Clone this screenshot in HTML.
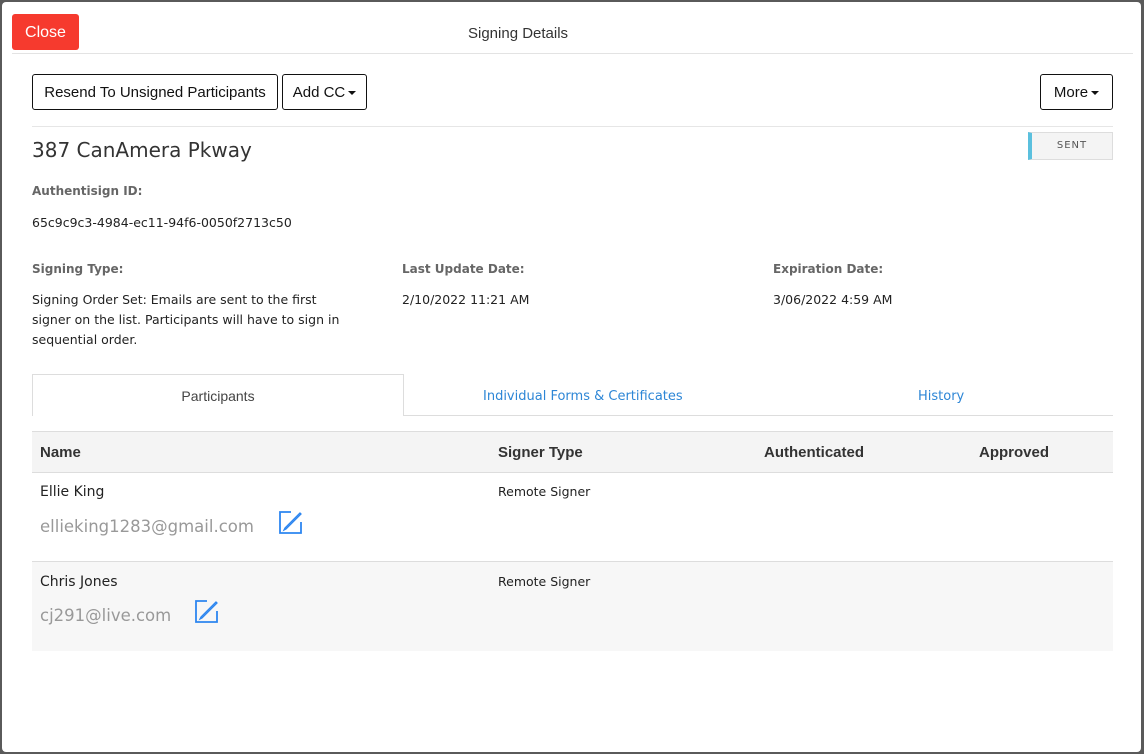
<!DOCTYPE html><html><head><style>
body{margin:0;width:1144px;height:754px;background:#5a5a5a;font-family:"Liberation Sans",sans-serif;position:relative;overflow:hidden}
.m{position:absolute;left:2px;top:2px;width:1139px;height:750px;background:#fff;border-radius:4px}
.a{position:absolute;white-space:nowrap}
.d{font-family:"DejaVu Sans",sans-serif}
.btn{position:absolute;border:1px solid #111;border-radius:3px;background:#fff;font-size:15px;color:#111;height:36px;line-height:36px;text-align:center;box-sizing:border-box}
.car{display:inline-block;width:0;height:0;border-left:4px solid transparent;border-right:4px solid transparent;border-top:4px solid #111;vertical-align:middle;margin-left:3px}
.lbl{font-size:12px;color:#666;font-weight:bold;font-family:"DejaVu Sans",sans-serif}
.v{font-size:12.5px;color:#222;font-family:"DejaVu Sans",sans-serif}
</style></head><body><div class="m">
<div class="a" style="left:10px;top:12px;width:67px;height:36px;background:#f63a2e;border-radius:3px;color:#fff;font-size:16px;line-height:38px;text-align:center">Close</div>
<div class="a" style="left:466px;top:23px;font-size:15px;color:#333">Signing Details</div>
<div class="a" style="left:10px;top:51px;width:1121px;height:1px;background:#e3e3e3"></div>
<div class="btn" style="left:30px;top:72px;width:246px">Resend To Unsigned Participants</div>
<div class="btn" style="left:280px;top:72px;width:85px">Add CC<span class="car"></span></div>
<div class="btn" style="left:1038px;top:72px;width:73px">More<span class="car"></span></div>
<div class="a" style="left:30px;top:124px;width:1081px;height:1px;background:#e6e6e6"></div>
<div class="a d" style="left:30px;top:136px;font-size:20px;color:#333">387 CanAmera Pkway</div>
<div class="a d" style="left:1026px;top:130px;width:85px;height:28px;background:#f4f4f4;border:1px solid #ddd;border-left:4px solid #5bc0de;box-sizing:border-box;font-size:10px;color:#555;line-height:26px;text-align:center;letter-spacing:1px">SENT</div>
<div class="a lbl" style="left:30px;top:182px">Authentisign ID:</div>
<div class="a v" style="left:30px;top:213px">65c9c9c3-4984-ec11-94f6-0050f2713c50</div>
<div class="a lbl" style="left:30px;top:260px">Signing Type:</div>
<div class="a lbl" style="left:400px;top:260px">Last Update Date:</div>
<div class="a lbl" style="left:771px;top:260px">Expiration Date:</div>
<div class="a v" style="left:30px;top:288px;white-space:normal;width:320px;line-height:20px">Signing Order Set: Emails are sent to the first signer on the list. Participants will have to sign in sequential order.</div>
<div class="a v" style="left:400px;top:290px">2/10/2022 11:21 AM</div>
<div class="a v" style="left:771px;top:290px">3/06/2022 4:59 AM</div>
<div class="a" style="left:30px;top:413px;width:1081px;height:1px;background:#ddd"></div>
<div class="a" style="left:30px;top:372px;width:372px;height:42px;background:#fff;border:1px solid #ddd;border-bottom:none;box-sizing:border-box;font-size:14px;color:#444;text-align:center;line-height:42px">Participants</div>
<div class="a d" style="left:481px;top:387px;font-size:13px;color:#2d86d6">Individual Forms &amp; Certificates</div>
<div class="a d" style="left:916px;top:387px;font-size:13px;color:#2d86d6">History</div>
<div class="a" style="left:30px;top:429px;width:1081px;height:40px;background:#f4f4f4;border-top:1px solid #ddd;border-bottom:1px solid #ddd"></div>
<div class="a" style="left:38px;top:442px;font-size:15px;font-weight:bold;color:#333">Name</div>
<div class="a" style="left:496px;top:442px;font-size:15px;font-weight:bold;color:#333">Signer Type</div>
<div class="a" style="left:762px;top:442px;font-size:15px;font-weight:bold;color:#333">Authenticated</div>
<div class="a" style="left:977px;top:442px;font-size:15px;font-weight:bold;color:#333">Approved</div>
<div class="a" style="left:30px;top:559px;width:1081px;height:89px;background:#f7f7f7;border-top:1px solid #ddd"></div>
<div class="a d" style="left:38px;top:482px;font-size:14px;color:#222">Ellie King</div>
<div class="a d" style="left:38px;top:515px;font-size:16.5px;color:#999">ellieking1283@gmail.com</div>
<div class="a v" style="left:496px;top:482px">Remote Signer</div>
<div class="a d" style="left:38px;top:572px;font-size:14px;color:#222">Chris Jones</div>
<div class="a d" style="left:38px;top:604px;font-size:16.5px;color:#999">cj291@live.com</div>
<div class="a v" style="left:496px;top:572px">Remote Signer</div>
<svg class="a" style="left:277px;top:509px" width="24" height="24" viewBox="0 0 24 24"><path d="M12 1H1v21h21V11" fill="none" stroke="#2d86f0" stroke-width="1.8"/><path d="M21 2L6 17l-1 2 2-1L22 3z" fill="none" stroke="#2d86f0" stroke-width="1.3"/></svg>
<svg class="a" style="left:193px;top:598px" width="24" height="24" viewBox="0 0 24 24"><path d="M12 1H1v21h21V11" fill="none" stroke="#2d86f0" stroke-width="1.8"/><path d="M21 2L6 17l-1 2 2-1L22 3z" fill="none" stroke="#2d86f0" stroke-width="1.3"/></svg>
</div></body></html>
